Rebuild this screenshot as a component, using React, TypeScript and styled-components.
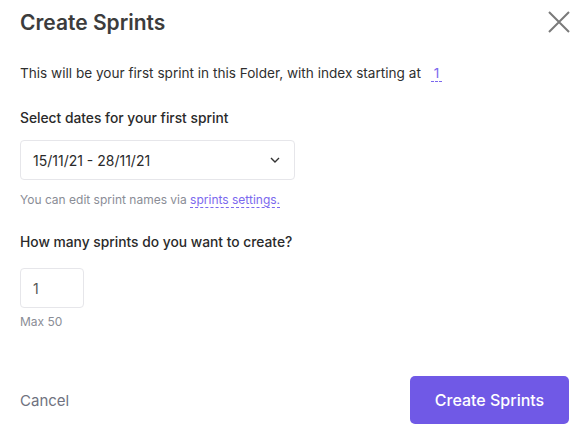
import React from "react";
import styled, { createGlobalStyle } from "styled-components";

const Global = createGlobalStyle`
  html, body { margin: 0; padding: 0; background: #fff; }
  body { font-family: Inter, "Noto Sans", sans-serif; -webkit-font-smoothing: antialiased; }
  * { box-sizing: border-box; }
`;

const Modal = styled.div`
  width: 586px;
  height: 433px;
  padding: 0 17px 9px 20px;
  display: flex;
  flex-direction: column;
`;

const Header = styled.div`
  display: flex;
  align-items: center;
  justify-content: space-between;
  height: 44px;
`;

const Title = styled.h1`
  margin: 0;
  font-size: 21px;
  font-weight: 600;
  color: #3c3c3c;
`;

const Close = styled.button`
  border: 0;
  background: none;
  padding: 0;
  width: 26px;
  height: 26px;
  display: flex;
  align-items: center;
  justify-content: center;
  cursor: pointer;
  margin-right: -3px;
`;

const Intro = styled.p`
  margin: 19px 0 0;
  font-size: 13.6px;
  color: #2f2f2f;
  line-height: 20px;
`;

const IndexLink = styled.span`
  color: #7b68ee;
  margin-left: 10px;
  padding: 0 3px;
  border-bottom: 1px dashed #7b68ee;
`;

const Label = styled.div<{ $top: number }>`
  margin-top: ${(p) => p.$top}px;
  font-size: 13.8px;
  font-weight: 500;
  color: #2a2a2a;
  line-height: 20px;
`;

const Field = styled.div<{ $top: number; $width: number }>`
  margin-top: ${(p) => p.$top}px;
  width: ${(p) => p.$width}px;
  height: 40px;
  border: 1px solid #e6e6ea;
  border-radius: 4px;
  display: flex;
  align-items: center;
  justify-content: space-between;
  padding: 0 14px 0 12px;
  font-size: 14px;
  color: #2a2a2a;
`;

const Help = styled.div<{ $top: number }>`
  margin-top: ${(p) => p.$top}px;
  font-size: 12px;
  color: #8a8d96;
  line-height: 16px;
`;

const HelpLink = styled.span`
  color: #7b68ee;
  border-bottom: 1px dashed #7b68ee;
`;

const FieldValue = styled.span<{ $muted?: boolean }>`
  color: ${(p) => (p.$muted ? "#555" : "#2a2a2a")};
`;

const Footer = styled.div`
  margin-top: auto;
  display: flex;
  align-items: center;
  justify-content: space-between;
`;

const Cancel = styled.button`
  border: 0;
  background: none;
  padding: 0;
  font-family: inherit;
  font-size: 15px;
  color: #6f7280;
  cursor: pointer;
`;

const Primary = styled.button`
  border: 0;
  width: 159px;
  height: 48px;
  border-radius: 5px;
  background: #7059e6;
  color: #fff;
  font-family: inherit;
  font-size: 16px;
  font-weight: 500;
  cursor: pointer;
`;

export default function App() {
  return (
    <>
      <Global />
      <Modal>
        <Header>
          <Title>Create Sprints</Title>
          <Close aria-label="Close">
            <svg width="22" height="22" viewBox="0 0 22 22">
              <path d="M1 1L21 21M21 1L1 21" stroke="#7a7a7a" strokeWidth="2" />
            </svg>
          </Close>
        </Header>
        <Intro>
          This will be your first sprint in this Folder, with index starting at
          <IndexLink>1</IndexLink>
        </Intro>
        <Label $top={25}>Select dates for your first sprint</Label>
        <Field $top={12} $width={275}>
          <FieldValue>15/11/21 - 28/11/21</FieldValue>
          <svg width="10" height="6" viewBox="0 0 10 6">
            <path d="M1 1L5 5L9 1" stroke="#333" strokeWidth="1.4" fill="none" />
          </svg>
        </Field>
        <Help $top={12}>
          You can edit sprint names via <HelpLink>sprints settings.</HelpLink>
        </Help>
        <Label $top={24}>How many sprints do you want to create?</Label>
        <Field $top={16} $width={64}>
          <FieldValue $muted>1</FieldValue>
        </Field>
        <Help $top={6}>Max 50</Help>
        <Footer>
          <Cancel>Cancel</Cancel>
          <Primary>Create Sprints</Primary>
        </Footer>
      </Modal>
    </>
  );
}
